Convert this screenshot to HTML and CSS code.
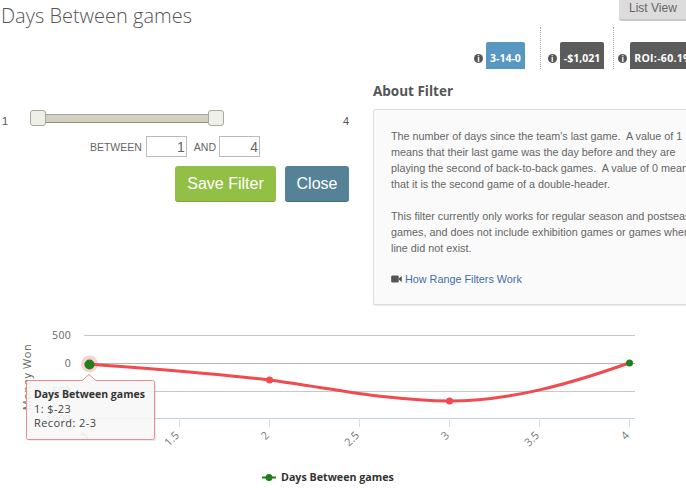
FILE: index.html
```html
<!DOCTYPE html>
<html lang="en">
<head>
    <meta charset="UTF-8">
    <meta name="viewport" content="width=device-width, initial-scale=1.0">
    <title>Days Between games</title>
    <link rel="stylesheet" href="styles.css">
</head>
<body>
    <div class="page">
        <div class="header">
            <h1>Days Between games</h1>
            <a class="list-view">List View</a>
        </div>

        <div class="stats">
            <div class="stat stat-record">
                <span class="info">i</span>
                <span class="badge badge-blue">3-14-0</span>
            </div>
            <div class="stat stat-money">
                <span class="info">i</span>
                <span class="badge">-$1,021</span>
            </div>
            <div class="stat stat-roi">
                <span class="info">i</span>
                <span class="badge">ROI:-60.1%</span>
            </div>
        </div>

        <div class="columns">
            <div class="filter">
                <div class="slider">
                    <span class="slider-min">1</span>
                    <div class="track">
                        <span class="handle"></span>
                        <span class="bar"></span>
                        <span class="handle"></span>
                    </div>
                    <span class="slider-max">4</span>
                </div>
                <div class="range">
                    <label>BETWEEN</label>
                    <input type="text" value="1">
                    <label class="and">AND</label>
                    <input type="text" value="4">
                </div>
                <div class="actions">
                    <button class="save">Save Filter</button>
                    <button class="close">Close</button>
                </div>
            </div>

            <div class="about">
                <h2>About Filter</h2>
                <div class="about-box">
                    <p>The number of days since the team's last game.&nbsp; A value of 1<br>
                    means that their last game was the day before and they are<br>
                    playing the second of back-to-back games.&nbsp; A value of 0 means<br>
                    that it is the second game of a double-header.</p>
                    <p>This filter currently only works for regular season and postseason<br>
                    games, and does not include exhibition games or games where the<br>
                    line did not exist.</p>
                    <p class="how-to">
                        <svg class="video-icon" width="11" height="8" viewBox="0 0 12 9"><rect x="0" y="0.5" width="8.5" height="8" rx="1.5"/><path d="M8.5 4 L12 1 V8 L8.5 5 Z"/></svg>
                        <a href="#">How Range Filters Work</a>
                    </p>
                </div>
            </div>
        </div>

        <svg class="chart" width="686" height="178" viewBox="0 310 686 178">
            <!-- grid -->
            <path class="grid" d="M84 335.5H635M84 391.5H635"/>
            <path class="grid-zero" d="M84 363.5H635"/>
            <path class="axis" d="M84 418.5H635"/>
            <path class="tick" d="M89.5 418V427M179.5 418V427M269.5 418V427M359.5 418V427M449.5 418V427M539.5 418V427M629.5 418V427"/>

            <!-- y axis -->
            <text class="y-label" x="71" y="339">500</text>
            <text class="y-label" x="71" y="367">0</text>
            <text class="y-label" x="71" y="395">-500</text>
            <text class="y-label" x="71" y="423">-1000</text>
            <text class="y-title" transform="translate(31 377) rotate(-90)">Money Won</text>

            <!-- x axis -->
            <text class="x-label" transform="translate(90 436) rotate(-45)">1</text>
            <text class="x-label" transform="translate(180 436) rotate(-45)">1.5</text>
            <text class="x-label" transform="translate(270 436) rotate(-45)">2</text>
            <text class="x-label" transform="translate(360 436) rotate(-45)">2.5</text>
            <text class="x-label" transform="translate(450 436) rotate(-45)">3</text>
            <text class="x-label" transform="translate(540 436) rotate(-45)">3.5</text>
            <text class="x-label" transform="translate(630 436) rotate(-45)">4</text>

            <!-- series -->
            <path class="line" d="M89 364 C150 369 210 373 269 380 C330 388 390 401 449 401 C510 401 570 384 629 363"/>
            <circle class="halo" cx="89.5" cy="364" r="8.5"/>
            <circle class="point-red" cx="269.5" cy="380" r="3.5"/>
            <circle class="point-red" cx="449.5" cy="401" r="3.5"/>
            <circle class="point-green" cx="629.5" cy="363" r="3.5"/>
            <circle class="point-green" cx="89.5" cy="364.5" r="5"/>

            <!-- tooltip -->
            <path class="tooltip-shadow" d="M29 381.5H82L89 375.5L96 381.5H156V441H29Z"/>
            <path class="tooltip-box" d="M28 380.5H82L89 374.5L96 380.5H152.5Q154.5 380.5 154.5 382.5V437.5Q154.5 439.5 152.5 439.5H28Q26.5 439.5 26.5 437.5V382.5Q26.5 380.5 28 380.5Z"/>
            <text class="tooltip-title" x="34" y="398">Days Between games</text>
            <text class="tooltip-text" x="34" y="413">1: $-23</text>
            <text class="tooltip-text" x="34" y="427">Record: 2-3</text>

            <!-- legend -->
            <path class="legend-line" d="M262 477.5H276"/>
            <circle class="point-green" cx="269" cy="477.5" r="3.5"/>
            <text class="legend-text" x="281" y="481">Days Between games</text>
        </svg>
    </div>
</body>
</html>
```

FILE: styles.css
```css
* {
    margin: 0;
    padding: 0;
    box-sizing: border-box;
}

body {
    background: white;
    width: 686px;
    height: 488px;
    overflow: hidden;
    font-family: 'Liberation Sans', Arial, sans-serif;
    color: #666;
}

.page {
    width: 780px;
}

.header {
    display: flex;
    justify-content: space-between;
    height: 27px;
    padding-left: 1px;
}

h1 {
    font-family: 'Open Sans', sans-serif;
    font-weight: 300;
    font-size: 20px;
    line-height: 32px;
    color: #555;
    white-space: nowrap;
}

.list-view {
    width: 161px;
    height: 21px;
    padding-left: 10px;
    background: #dcdcdc;
    border-bottom: 2px solid #c8c8c8;
    border-radius: 0 0 3px 3px;
    font-size: 12px;
    line-height: 16px;
    color: #666;
}

.stats {
    display: flex;
    height: 42px;
    padding-left: 474px;
}

.stat {
    display: flex;
    align-items: flex-end;
    gap: 3px;
    border-right: 1px dotted #aaa;
}

.stat-record {
    padding-right: 15px;
}

.stat-money {
    padding-left: 7px;
    padding-right: 9px;
}

.stat-roi {
    padding-left: 4px;
    border-right: none;
}

.stat-roi .badge {
    letter-spacing: 0.3px;
}

.info {
    width: 9px;
    height: 9px;
    margin-bottom: 6px;
    border-radius: 50%;
    background: #555;
    color: white;
    font-family: 'Open Sans', sans-serif;
    font-size: 8px;
    font-weight: 700;
    line-height: 9px;
    text-align: center;
}

.badge {
    height: 27px;
    padding: 0 4px;
    background: #5b5b5b;
    border-radius: 2px 2px 0 0;
    color: white;
    font-family: 'Open Sans', sans-serif;
    font-size: 10.5px;
    font-weight: 700;
    line-height: 32px;
    white-space: nowrap;
}

.badge-blue {
    background: #5797c1;
}

.columns {
    display: flex;
    height: 241px;
}

.filter {
    width: 349px;
    margin-right: 24px;
    padding-top: 41px;
}

.slider {
    display: flex;
    align-items: center;
    height: 16px;
    font-size: 11px;
    color: #555;
}

.slider-min {
    width: 30px;
    padding-left: 2px;
    padding-top: 5px;
}

.slider-max {
    margin-left: auto;
    width: 6px;
    padding-top: 5px;
}

.track {
    display: flex;
    align-items: center;
    width: 194px;
}

.handle {
    flex: none;
    width: 16px;
    height: 16px;
    background: #eeefe8;
    border: 1px solid #a9a899;
    border-radius: 3px;
}

.bar {
    flex: 1;
    height: 9px;
    background: #d2d0c2;
    border-top: 1px solid #a5a396;
    border-bottom: 1px solid #8f8d80;
}

.range {
    display: flex;
    align-items: center;
    justify-content: flex-end;
    height: 21px;
    margin-top: 10px;
    padding-right: 89px;
    font-size: 10.5px;
    color: #666;
}

.range label {
    margin-right: 4px;
}

.range .and {
    margin-left: 7px;
    margin-right: 3px;
}

.range input {
    width: 41px;
    height: 21px;
    padding-right: 1px;
    border: 1px solid #bbb;
    font-family: 'Liberation Sans', Arial, sans-serif;
    font-size: 14px;
    color: #666;
    text-align: right;
}

.actions {
    display: flex;
    justify-content: flex-end;
    gap: 9px;
    margin-top: 9px;
}

button {
    height: 36px;
    padding-top: 1px;
    border: none;
    border-radius: 3px;
    color: white;
    font-family: 'Liberation Sans', Arial, sans-serif;
    font-size: 16px;
}

.save {
    width: 101px;
    background: #92bf45;
    border-bottom: 1px solid #7fa83a;
}

.close {
    width: 64px;
    background: #568297;
    border-bottom: 1px solid #476f82;
}

.about {
    flex: 1;
}

h2 {
    font-family: 'Open Sans', sans-serif;
    font-size: 13.5px;
    font-weight: 700;
    line-height: 20px;
    color: #555;
    margin-top: 12px;
    margin-bottom: 8px;
}

.about-box {
    height: 196px;
    padding: 18px 17px;
    background: #fafafa;
    border: 1px solid #ddd;
    border-radius: 2px;
    box-shadow: 0 1px 1px rgba(0, 0, 0, 0.08);
    font-size: 10.8px;
    line-height: 16px;
    color: #666;
    white-space: nowrap;
}

.about-box p {
    margin-bottom: 16px;
}

.how-to {
    display: flex;
    align-items: center;
    gap: 3px;
    margin-top: -1px;
}

.video-icon {
    fill: #555;
}

.about-box a {
    color: #3d6fa8;
    text-decoration: none;
}

.chart {
    display: block;
    font-family: 'Open Sans', sans-serif;
}

.grid {
    stroke: #c8c8c8;
    fill: none;
}

.grid-zero {
    stroke: #b5b5b5;
    fill: none;
}

.axis {
    stroke: #c0d0e0;
    fill: none;
}

.tick {
    stroke: #d5dfe9;
    fill: none;
}

.y-label {
    font-size: 10.5px;
    fill: #666;
    text-anchor: end;
    letter-spacing: 0.3px;
}

.y-title {
    font-size: 11px;
    fill: #666;
    text-anchor: middle;
    letter-spacing: 0.6px;
}

.x-label {
    font-size: 11px;
    fill: #777;
    text-anchor: end;
}

.line {
    fill: none;
    stroke: #f04b4f;
    stroke-width: 3;
    stroke-linecap: round;
}

.halo {
    fill: #f04b4f;
    fill-opacity: 0.25;
}

.point-red {
    fill: #f04b4f;
}

.point-green {
    fill: #1f7f1f;
}

.tooltip-shadow {
    fill: rgba(0, 0, 0, 0.08);
}

.tooltip-box {
    fill: rgba(249, 249, 249, 0.88);
    stroke: #e88f92;
    stroke-width: 1;
}

.tooltip-title {
    font-size: 10.5px;
    font-weight: 700;
    fill: #333;
}

.tooltip-text {
    font-size: 11px;
    fill: #444;
    letter-spacing: 0.4px;
}

.legend-line {
    stroke: #1f7f1f;
    stroke-width: 2;
}

.legend-text {
    font-size: 10.7px;
    font-weight: 700;
    fill: #333;
}
```
